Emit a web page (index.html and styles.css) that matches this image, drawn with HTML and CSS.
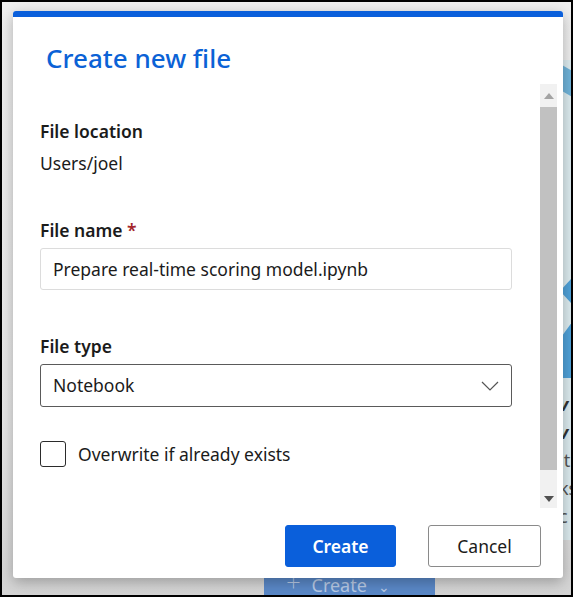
FILE: index.html
```html
<!DOCTYPE html>
<html>
<head>
<meta charset="utf-8">
<link rel="stylesheet" href="styles.css">
</head>
<body>
<div class="frame">
  <div class="page">
    <div class="side">
      <div class="shape s1"></div>
      <div class="shape s2"></div>
      <div class="shape s3"></div>
      <div class="side-text">
        <span class="big">v</span>
        <span class="big">v</span>
        <span>it</span>
        <span>ks</span>
        <span>c</span>
      </div>
    </div>
    <div class="bg-bar">
      <div class="bg-btn"><span class="plus">+</span> Create <span class="caret">⌄</span></div>
    </div>
  </div>
  <div class="dialog">
    <div class="accent"></div>
    <h1 class="title">Create new file</h1>
    <div class="body">
      <div class="content">
        <div class="field">
          <div class="label">File location</div>
          <div class="value">Users/joel</div>
        </div>
        <div class="field gap-name">
          <div class="label">File name <span class="req">*</span></div>
          <div class="input">Prepare real-time scoring model.ipynb</div>
        </div>
        <div class="field gap-type">
          <div class="label">File type</div>
          <div class="select">
            <span>Notebook</span>
            <svg class="chev" width="18" height="10" viewBox="0 0 18 10"><path d="M1 1 L9 9 L17 1" fill="none" stroke="#555" stroke-width="1.2"/></svg>
          </div>
        </div>
        <label class="check">
          <span class="box"></span>
          <span>Overwrite if already exists</span>
        </label>
      </div>
      <div class="scrollbar">
        <div class="arrow up"><svg width="10" height="6" viewBox="0 0 10 6"><path d="M0 6 L5 0 L10 6Z" fill="#a3a3a3"/></svg></div>
        <div class="thumb"></div>
        <div class="track"></div>
        <div class="arrow down"><svg width="10" height="6" viewBox="0 0 10 6"><path d="M0 0 L5 6 L10 0Z" fill="#505050"/></svg></div>
      </div>
    </div>
    <div class="footer">
      <button class="btn primary">Create</button>
      <button class="btn">Cancel</button>
    </div>
  </div>
</div>
</body>
</html>
```
FILE: styles.css
```css
* { box-sizing: border-box; }
html, body { margin: 0; padding: 0; }
body { font-family: "Noto Sans", "Open Sans", sans-serif; color: #1b1b1b; }

.frame {
  position: relative;
  width: 573px;
  height: 597px;
  border: 2px solid #000;
  overflow: hidden;
  background: linear-gradient(to bottom, #efefef 0%, #e6e6e6 70%, #d4d4d4 100%);
}

.page {
  height: 100%;
  display: flex;
  flex-direction: column;
  justify-content: flex-end;
  position: relative;
}

.side {
  position: absolute;
  right: 0;
  top: 58px;
  width: 14px;
  height: 480px;
  background: #dcebef;
}
.shape { position: absolute; background: #6fb3d9; }
.s1 { left: 5px; top: 8px; width: 10px; height: 26px; transform: skewY(30deg); }
.s2 { left: 3px; top: 218px; width: 12px; height: 26px; clip-path: polygon(100% 0, 0 50%, 100% 100%); background: #4fa1d8; }
.s3 { left: 3px; top: 262px; width: 12px; height: 56px; clip-path: polygon(100% 0, 0 30%, 0 100%, 100% 100%); background: #4fa1d8; }
.side-text {
  position: absolute;
  left: 2px; top: 330px;
  display: flex; flex-direction: column;
  font-size: 18px; line-height: 28px; color: #555;
}
.side-text .big { font-weight: 700; font-style: italic; color: #333; }

.bg-bar { height: 19px; padding-left: 262px; }
.bg-btn {
  width: 171px; height: 40px;
  background: #5a88c7;
  color: #b9cbe6;
  font-size: 18px;
  padding-left: 22px;
  line-height: 12px;
}
.bg-btn .plus { font-size: 26px; font-weight: 200; margin-right: 6px; }
.bg-btn .caret { font-size: 14px; margin-left: 6px; }

.dialog {
  position: absolute;
  left: 11px;
  top: 9px;
  width: 550px;
  height: 567px;
  background: #fff;
  border-radius: 3px;
  box-shadow: 0 4px 14px rgba(0,0,0,0.28);
  display: flex;
  flex-direction: column;
}
.accent {
  height: 6px;
  background: #0a5fdb;
  border-radius: 3px 3px 0 0;
}
.title {
  margin: 0;
  padding: 23px 0 0 33px;
  height: 67px;
  font-size: 26px;
  line-height: 36px;
  font-weight: 500;
  color: #0b62d6;
}

.body {
  height: 424px;
  display: flex;
}
.content {
  flex: 1;
  padding: 35px 0 0 27px;
}
.field { display: flex; flex-direction: column; }
.label { font-size: 17.5px; line-height: 24px; font-weight: 600; color: #1b1b1b; }
.req { color: #a4262c; }
.value { font-size: 17.5px; line-height: 24px; margin-top: 8px; }
.gap-name { margin-top: 43px; }
.gap-type { margin-top: 44px; }
.input {
  margin-top: 6px;
  width: 472px;
  height: 42px;
  border: 1px solid #dcdcdc;
  border-radius: 3px;
  padding: 0 12px;
  font-size: 17.5px;
  line-height: 40px;
}
.select {
  margin-top: 6px;
  width: 472px;
  height: 43px;
  border: 1px solid #5a5a5a;
  border-radius: 3px;
  padding: 0 12px;
  font-size: 17.5px;
  line-height: 41px;
  display: flex;
  align-items: center;
  justify-content: space-between;
}
.check {
  margin-top: 34px;
  display: flex;
  align-items: center;
  gap: 12px;
  font-size: 17.5px;
}
.box {
  width: 26px; height: 26px;
  border: 1px solid #2b2b2b;
  border-radius: 3px;
}

.scrollbar {
  width: 17px;
  margin-right: 6px;
  display: flex;
  flex-direction: column;
  background: #f1f1f1;
}
.arrow { height: 23px; display: flex; align-items: center; justify-content: center; }
.arrow.down { height: 18px; }
.thumb { height: 363px; background: #c1c1c1; }
.track { flex: 1; }

.footer {
  flex: 1;
  display: flex;
  justify-content: flex-end;
  gap: 32px;
  padding: 17px 22px 0 0;
}
.btn {
  width: 113px;
  height: 42px;
  border: 1px solid #8a8a8a;
  border-radius: 3px;
  background: #fff;
  font-family: "Noto Sans", "Open Sans", sans-serif;
  font-size: 17.5px;
  color: #1b1b1b;
  padding: 0;
}
.btn.primary {
  width: 111px;
  background: #0a5fdb;
  border-color: #0a5fdb;
  color: #fff;
  font-weight: 600;
}
```
